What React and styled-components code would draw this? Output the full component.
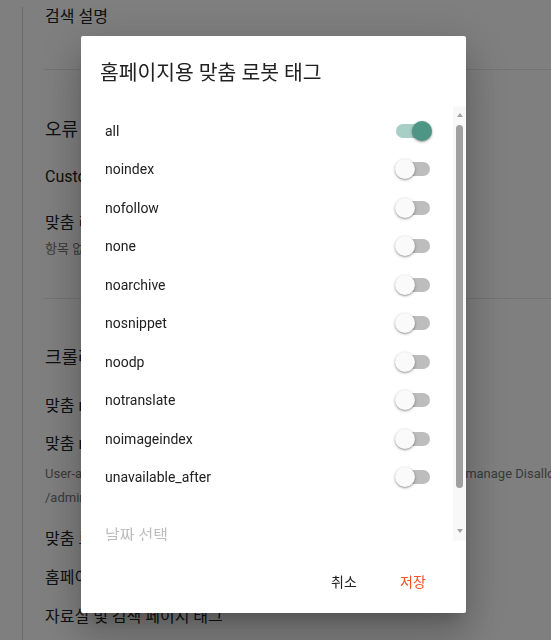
import React from 'react';
import styled, { createGlobalStyle } from 'styled-components';

const GlobalStyle = createGlobalStyle`
  html, body {
    margin: 0;
    padding: 0;
  }
  body {
    font-family: Roboto, "Noto Sans CJK KR", sans-serif;
    background: #fff;
    overflow: hidden;
  }
`;

const Page = styled.div`
  width: 551px;
  height: 640px;
  overflow: hidden;
  background: #fff;
`;

const Main = styled.div`
  margin-left: 22px;
  height: 100%;
  border-left: 1px solid #d6d6d6;
  padding-left: 22px;
  color: #212121;
`;

const Divider = styled.div`
  height: 1px;
  margin-left: -1px;
  margin-top: ${p => p.$top}px;
  background: #e6e6e6;
`;

const Heading = styled.div`
  margin-top: ${p => p.$top}px;
  font-size: 18px;
  line-height: 24px;
  white-space: nowrap;
`;

const Label = styled.div`
  margin-top: ${p => p.$top}px;
  font-size: 16px;
  line-height: 20px;
  white-space: nowrap;
`;

const Hint = styled.div`
  margin-top: ${p => p.$top}px;
  font-size: 13px;
  line-height: ${p => p.$lh || 16}px;
  color: #757575;
  white-space: nowrap;
`;

const Overlay = styled.div`
  position: fixed;
  inset: 0;
  background: rgba(0, 0, 0, 0.5);
  display: flex;
  align-items: flex-start;
  padding: 36px 0 0 81px;
`;

const Dialog = styled.div`
  width: 385px;
  height: 577px;
  background: #fff;
  border-radius: 2px;
  box-shadow: 0 11px 15px -7px rgba(0, 0, 0, 0.2), 0 24px 38px 3px rgba(0, 0, 0, 0.14),
    0 9px 46px 8px rgba(0, 0, 0, 0.12);
  display: flex;
  flex-direction: column;
  overflow: hidden;
`;

const Title = styled.h2`
  margin: 0;
  height: 70px;
  box-sizing: border-box;
  padding: 25px 24px 0 19px;
  font-size: 20.4px;
  line-height: 24px;
  font-weight: 400;
  color: #212121;
`;

const ScrollArea = styled.div`
  display: flex;
  height: 435px;
`;

const List = styled.div`
  flex: 1;
  overflow: hidden;
  padding: 5.5px 21px 0 24px;
`;

const Option = styled.div`
  height: 38.5px;
  display: flex;
  align-items: center;
  justify-content: space-between;
  font-size: 14px;
  color: #212121;
`;

const Switch = styled.div`
  position: relative;
  width: 37px;
  height: 20px;
`;

const Track = styled.div`
  position: absolute;
  left: 1px;
  top: 3px;
  width: 34px;
  height: 14px;
  border-radius: 7px;
  background: ${p => (p.$on ? '#a7cfc6' : '#bdbdbd')};
`;

const Thumb = styled.div`
  position: absolute;
  top: 0;
  left: ${p => (p.$on ? 17 : 0)}px;
  width: 20px;
  height: 20px;
  border-radius: 50%;
  background: ${p => (p.$on ? '#4d9585' : '#fafafa')};
  box-shadow: 0 1px 3px rgba(0, 0, 0, 0.35), 0 1px 1px rgba(0, 0, 0, 0.12);
`;

const DateField = styled.div`
  margin-top: 29px;
  font-size: 16px;
  line-height: 20px;
  color: #bdbdbd;
`;

const Scrollbar = styled.div`
  width: 13px;
  background: #f8f8f8;
  display: flex;
  flex-direction: column;
  align-items: center;
`;

const ArrowUp = styled.div`
  margin-top: 7px;
  width: 0;
  height: 0;
  border-left: 3.5px solid transparent;
  border-right: 3.5px solid transparent;
  border-bottom: 4px solid #a3a3a3;
`;

const ArrowDown = styled.div`
  margin-top: auto;
  margin-bottom: 8px;
  width: 0;
  height: 0;
  border-left: 3.5px solid transparent;
  border-right: 3.5px solid transparent;
  border-top: 4px solid #a3a3a3;
`;

const ScrollThumb = styled.div`
  margin-top: 8px;
  width: 7px;
  height: 363px;
  border-radius: 4px;
  background: #a0a0a0;
`;

const Actions = styled.div`
  display: flex;
  justify-content: flex-end;
  gap: 5px;
  padding: 22px 21px 0;
`;

const Button = styled.button`
  min-width: 64px;
  height: 36px;
  padding: 0 8px;
  border: none;
  background: none;
  font-family: Roboto, "Noto Sans CJK KR", sans-serif;
  font-size: 14px;
  color: ${p => p.$color};
`;

const tags = [
  'all',
  'noindex',
  'nofollow',
  'none',
  'noarchive',
  'nosnippet',
  'noodp',
  'notranslate',
  'noimageindex',
  'unavailable_after',
];

function App() {
  return (
    <Page>
      <GlobalStyle />
      <Main>
        <Label $top={7}>검색 설명</Label>
        <Divider $top={42} />
        <Heading $top={48}>오류 및 리디렉션</Heading>
        <Label $top={25}>Custom 404</Label>
        <Label $top={26}>맞춤 리디렉션</Label>
        <Hint $top={8}>항목 없음</Hint>
        <Divider $top={41} />
        <Heading $top={47}>크롤러 및 색인 생성</Heading>
        <Label $top={26}>맞춤 robots.txt 사용 설정</Label>
        <Label $top={18}>맞춤 robots.txt</Label>
        <Hint $top={8} $lh={24}>
          User-agent: * Disallow: /owner Disallow: /admin Disallow: /blo Disallow: /manage Disallow: /search
          <br />
          /admin
        </Hint>
        <Label $top={19}>맞춤 로봇 헤더 태그 사용 설정</Label>
        <Label $top={19}>홈페이지 태그</Label>
        <Label $top={19}>자료실 및 검색 페이지 태그</Label>
      </Main>
      <Overlay>
        <Dialog>
          <Title>홈페이지용 맞춤 로봇 태그</Title>
          <ScrollArea>
            <List>
              {tags.map((tag, i) => (
                <Option key={tag}>
                  {tag}
                  <Switch>
                    <Track $on={i === 0} />
                    <Thumb $on={i === 0} />
                  </Switch>
                </Option>
              ))}
              <DateField>날짜 선택</DateField>
            </List>
            <Scrollbar>
              <ArrowUp />
              <ScrollThumb />
              <ArrowDown />
            </Scrollbar>
          </ScrollArea>
          <Actions>
            <Button $color="#212121">취소</Button>
            <Button $color="#f4511e">저장</Button>
          </Actions>
        </Dialog>
      </Overlay>
    </Page>
  );
}

export default App;
